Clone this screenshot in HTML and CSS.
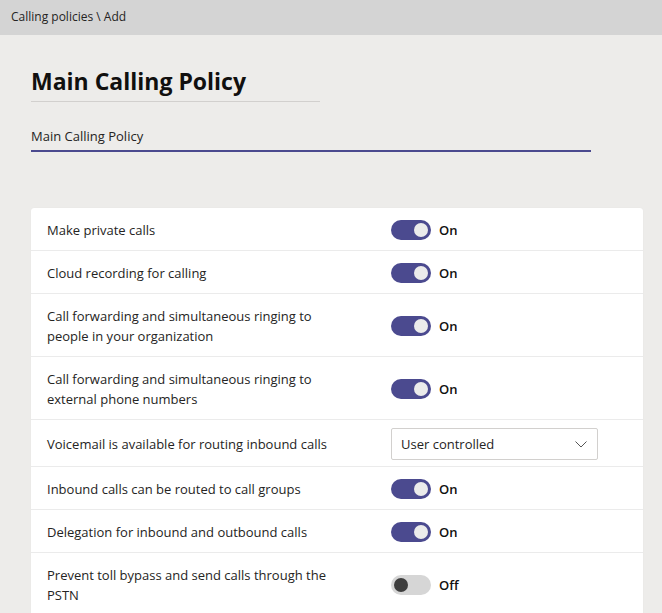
FILE: index.html
```html
<!DOCTYPE html>
<html>
<head>
<meta charset="utf-8">
<link rel="stylesheet" href="styles.css">
</head>
<body>
<div class="topbar">Calling policies \ Add</div>
<main class="content">
  <h1 class="title">Main Calling Policy</h1>
  <div class="name-field">Main Calling Policy</div>
  <section class="card">
    <div class="row">
      <div class="label">Make private calls</div>
      <div class="control"><span class="toggle on"><span class="knob"></span></span><span class="state">On</span></div>
    </div>
    <div class="row">
      <div class="label">Cloud recording for calling</div>
      <div class="control"><span class="toggle on"><span class="knob"></span></span><span class="state">On</span></div>
    </div>
    <div class="row">
      <div class="label">Call forwarding and simultaneous ringing to people in your organization</div>
      <div class="control"><span class="toggle on"><span class="knob"></span></span><span class="state">On</span></div>
    </div>
    <div class="row">
      <div class="label">Call forwarding and simultaneous ringing to external phone numbers</div>
      <div class="control"><span class="toggle on"><span class="knob"></span></span><span class="state">On</span></div>
    </div>
    <div class="row">
      <div class="label">Voicemail is available for routing inbound calls</div>
      <div class="control">
        <div class="select">
          <span>User controlled</span>
          <svg class="chev" width="12" height="7" viewBox="0 0 12 7"><path d="M0.5 0.5 L6 6 L11.5 0.5" fill="none" stroke="#555" stroke-width="1"/></svg>
        </div>
      </div>
    </div>
    <div class="row">
      <div class="label">Inbound calls can be routed to call groups</div>
      <div class="control"><span class="toggle on"><span class="knob"></span></span><span class="state">On</span></div>
    </div>
    <div class="row">
      <div class="label">Delegation for inbound and outbound calls</div>
      <div class="control"><span class="toggle on"><span class="knob"></span></span><span class="state">On</span></div>
    </div>
    <div class="row">
      <div class="label">Prevent toll bypass and send calls through the PSTN</div>
      <div class="control"><span class="toggle off"><span class="knob"></span></span><span class="state">Off</span></div>
    </div>
  </section>
</main>
</body>
</html>
```

FILE: styles.css
```css
html, body {
  margin: 0;
  padding: 0;
}
body {
  background: #edecea;
  font-family: "Open Sans", "Noto Sans", "Liberation Sans", sans-serif;
  color: #252423;
  height: 613px;
  overflow: hidden;
}
.topbar {
  height: 35px;
  background: #d4d4d4;
  font-size: 12px;
  line-height: 33px;
  padding-left: 11px;
  color: #252423;
}
.content {
  padding: 0 19px 0 31px;
}
.title {
  margin: 30px 0 0 0;
  width: 289px;
  font-size: 23px;
  font-weight: 700;
  line-height: 32px;
  padding-bottom: 4px;
  border-bottom: 1px solid #d2d0ce;
  color: #11100f;
}
.name-field {
  margin-top: 24px;
  width: 560px;
  font-size: 13px;
  line-height: 20px;
  padding-bottom: 4px;
  border-bottom: 2px solid #4b4a8f;
}
.card {
  margin-top: 56px;
  width: 612px;
  background: #ffffff;
  border-radius: 3px;
  box-shadow: 0 0 1px rgba(0,0,0,0.08);
}
.row {
  display: grid;
  grid-template-columns: 344px 1fr;
  align-items: center;
  padding: 12px 16px 10px;
  border-bottom: 1px solid #ebebeb;
  font-size: 13px;
  line-height: 20px;
}
.label {
  width: 300px;
}
.control {
  display: flex;
  align-items: center;
  gap: 8px;
}
.toggle {
  width: 40px;
  height: 20px;
  border-radius: 10px;
  display: flex;
  align-items: center;
  box-sizing: border-box;
  padding: 0 3px;
}
.toggle.on {
  background: #4b4a8f;
  justify-content: flex-end;
}
.toggle.off {
  background: #d6d6d6;
  justify-content: flex-start;
}
.knob {
  width: 14px;
  height: 14px;
  border-radius: 50%;
}
.toggle.on .knob {
  background: #ebebeb;
}
.toggle.off .knob {
  background: #3e3e3e;
}
.state {
  font-weight: 600;
  color: #11100f;
}
.select {
  width: 207px;
  height: 32px;
  margin: -4px 0;
  box-sizing: border-box;
  border: 1px solid #d2d0ce;
  border-radius: 2px;
  display: flex;
  align-items: center;
  justify-content: space-between;
  padding: 0 10px 0 9px;
  font-size: 13px;
}
.chev {
  display: block;
}
```
